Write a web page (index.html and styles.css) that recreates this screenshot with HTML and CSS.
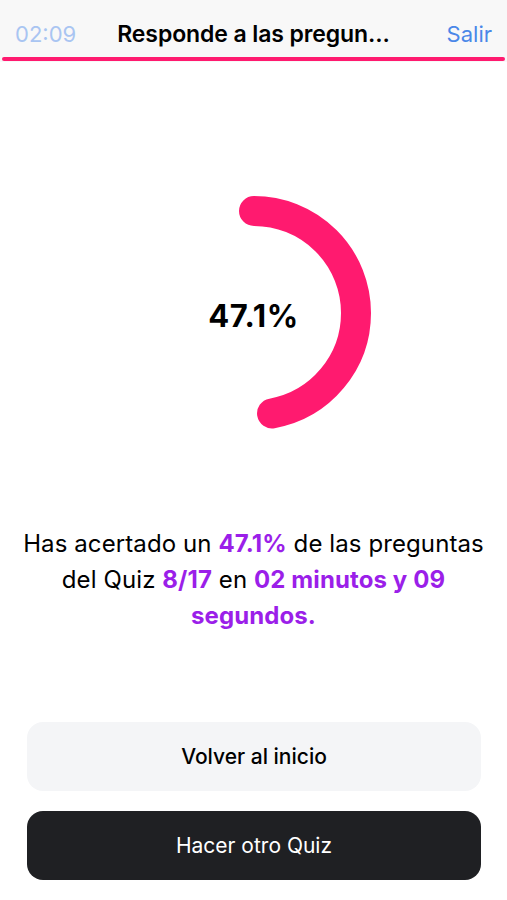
FILE: index.html
```html
<!DOCTYPE html>
<html lang="es">
<head>
    <title>Resultado del Quiz</title>
    <meta charset="utf-8">
    <link rel="stylesheet" href="styles.css">
</head>
<body>

<div class="header">
    <div class="header-bar">
        <span class="timer">02:09</span>
        <span class="title">Responde a las pregun...</span>
        <a class="exit" href="#">Salir</a>
    </div>
    <div class="progress"></div>
</div>

<div class="result">
    <div class="ring">
        <svg width="240" height="240" viewBox="0 0 240 240">
            <!-- 47.1% of the circle, starting at the top -->
            <circle cx="120" cy="120" r="102" fill="none" stroke="#ff1a6f" stroke-width="30"
                    stroke-linecap="round" stroke-dasharray="301.8 1000" transform="rotate(-90 120 120)"/>
        </svg>
        <span class="ring-label">47.1%</span>
    </div>

    <p class="summary">
        Has acertado un <strong>47.1%</strong> de las preguntas del Quiz <strong>8/17</strong> en <strong>02 minutos y 09 segundos.</strong>
    </p>
</div>

<div class="actions">
    <a class="btn btn-light" href="#">Volver al inicio</a>
    <a class="btn btn-dark" href="#">Hacer otro Quiz</a>
</div>

</body>
</html>
```

FILE: styles.css
```css
html {
    height: 100%;
}
body {
    margin: 0;
    padding: 0;
    background: #ffffff;
    color: #000000;
    font-family: Inter, "Liberation Sans", sans-serif;
    height: 100%;
    display: flex;
    flex-direction: column;
}

a {
    text-decoration: none;
}

.header {
    background-color: #f8f8f8;
    padding-bottom: 1px;
}

.header-bar {
    height: 57px;
    display: flex;
    align-items: center;
    justify-content: space-between;
    padding: 10px 15px 0 15px;
    box-sizing: border-box;
}

.timer {
    color: #a9c5f2;
    font-size: 22px;
    width: 80px;
}

.title {
    font-size: 23px;
    font-weight: 600;
    letter-spacing: -0.1px;
}

.exit {
    color: #4a87e8;
    font-size: 22px;
    width: 80px;
    text-align: right;
}

.progress {
    height: 4px;
    margin: 0 2px;
    border-radius: 2px;
    background-color: #ff1a6f;
}

.result {
    display: flex;
    flex-direction: column;
    align-items: center;
}

.ring {
    margin-top: 131px;
    width: 240px;
    height: 240px;
    position: relative;
}

.ring svg {
    display: block;
}

.ring-label {
    position: absolute;
    left: 0;
    right: 0;
    top: 0;
    bottom: 0;
    display: flex;
    align-items: center;
    justify-content: center;
    font-size: 31px;
    font-weight: 700;
    letter-spacing: 0.6px;
    padding-top: 4px;
}

.summary {
    margin: 93px 18px 0 18px;
    text-align: center;
    font-size: 24px;
    line-height: 36px;
    letter-spacing: 0.1px;
}

.summary strong {
    color: #9b1fe9;
    font-weight: 700;
}

.actions {
    margin-top: auto;
    padding: 0 26px 20px 27px;
    display: flex;
    flex-direction: column;
    gap: 20px;
}

.btn {
    height: 69px;
    border-radius: 16px;
    display: flex;
    align-items: center;
    justify-content: center;
    font-size: 21px;
}

.btn-light {
    background-color: #f4f5f7;
    color: #000000;
    font-weight: 500;
}

.btn-dark {
    background-color: #1f2023;
    color: #ffffff;
}
```
